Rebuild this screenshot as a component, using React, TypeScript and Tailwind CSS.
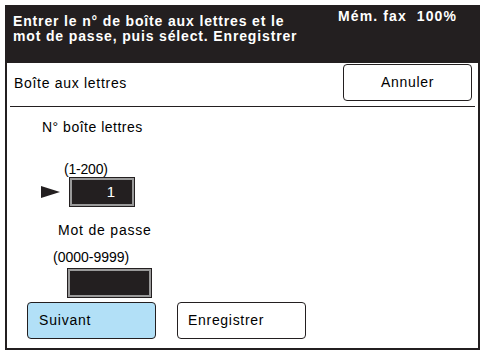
import React from "react";

export default function App() {
  return (
    <div className="w-[485px] h-[354px] bg-white relative overflow-hidden" style={{ fontFamily: '"Liberation Sans", Arial, sans-serif' }}>
      <div className="ml-[5px] mt-[5px] w-[475px] h-[345px] flex flex-col">
        {/* Header */}
        <div className="h-[58px] bg-[#231f20] text-white flex justify-between pl-[8px] pt-[9px]">
          <div className="text-[14px] font-bold leading-[15px] tracking-[0.85px]">
            <div>Entrer le n° de boîte aux lettres et le</div>
            <div>mot de passe, puis sélect. Enregistrer</div>
          </div>
          <div className="text-[14px] font-bold leading-[15px] tracking-[1.1px] -mt-[5px] mr-[23px] whitespace-pre">Mém. fax  100%</div>
        </div>
        {/* Body */}
        <div className="flex-1 border-l-2 border-r-2 border-b-2 border-[#231f20] flex flex-col">
          <div className="h-[44px] mx-[3px] border-b border-[#231f20] flex items-center justify-between">
            <div className="text-[14px] pl-[4px] -mt-[3px] tracking-[0.7px]">Boîte aux lettres</div>
            <div className="w-[129px] h-[37px] mr-[3px] mb-[4px] rounded-[4px] border border-[#231f20] flex items-center justify-center text-[14px] tracking-[0.7px]">Annuler</div>
          </div>
          <div className="flex flex-col pl-[21px]">
            <div className="text-[14px] mt-[12px] ml-[14px] leading-[16px] tracking-[0.5px]">N° boîte lettres</div>
            <div className="text-[14px] mt-[26px] ml-[36px] leading-[16px] tracking-[-0.2px]">(1-200)</div>
            <div className="flex items-center mt-[0px]">
              <svg width="19" height="12" viewBox="0 0 19 12" className="ml-[13px]">
                <polygon points="0,0 19,6 0,12" fill="#231f20" />
              </svg>
              <div className="ml-[9px] w-[66px] h-[30px] border border-[#231f20] bg-[#9a9a9a] p-[2px]">
                <div className="w-full h-full bg-[#231f20] text-white text-[15px] flex items-center justify-end pr-[17px]">1</div>
              </div>
            </div>
            <div className="text-[14px] mt-[15px] ml-[30px] leading-[16px] tracking-[0.8px]">Mot de passe</div>
            <div className="text-[14px] mt-[11px] ml-[25px] leading-[16px] tracking-[0px]">(0000-9999)</div>
            <div className="ml-[39px] mt-[3px] w-[85px] h-[30px] border border-[#231f20] bg-[#9a9a9a] p-[2px]">
              <div className="w-full h-full bg-[#231f20]" />
            </div>
          </div>
          <div className="flex mt-[4px] ml-[20px] gap-[21px]">
            <div className="w-[129px] h-[37px] rounded-[4px] border border-[#231f20] bg-[#b2e0f7] flex items-center pl-[11px] text-[14px] tracking-[0.8px]">Suivant</div>
            <div className="w-[129px] h-[37px] rounded-[4px] border border-[#231f20] bg-white flex items-center pl-[10px] text-[14px] tracking-[0.7px]">Enregistrer</div>
          </div>
        </div>
      </div>
    </div>
  );
}
